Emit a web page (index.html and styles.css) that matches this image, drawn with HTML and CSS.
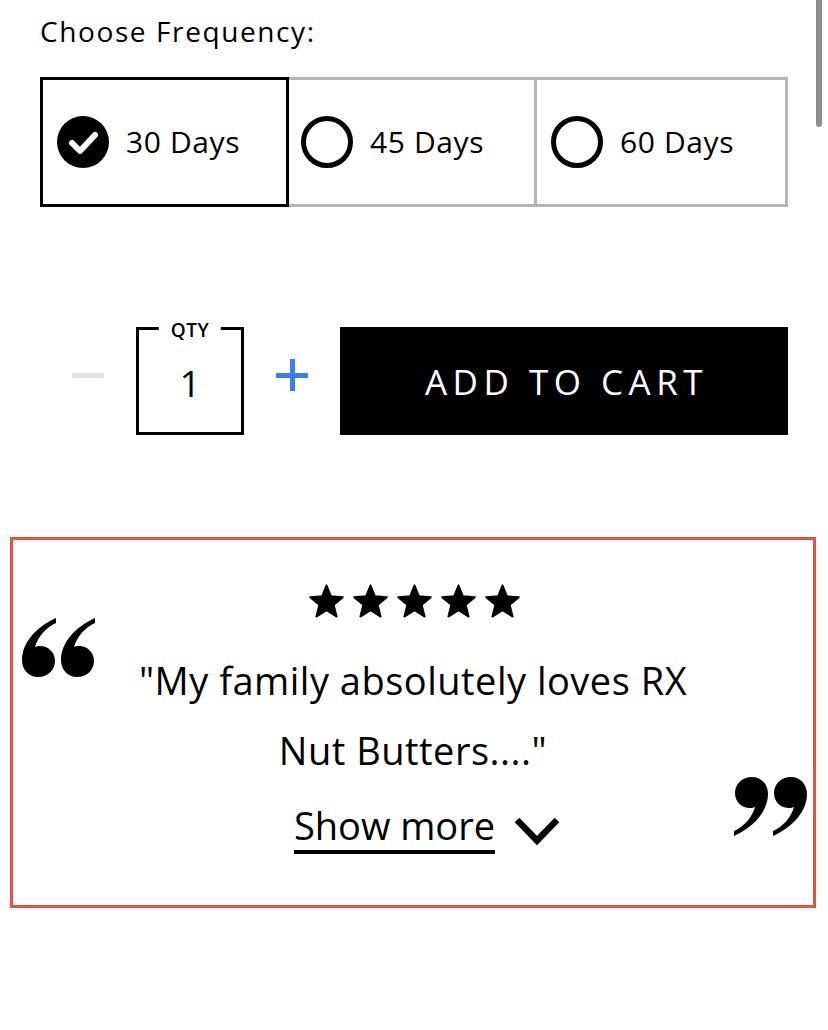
FILE: index.html
```html
<!DOCTYPE html>
<html>
<head>
<meta charset="utf-8">
<link rel="stylesheet" href="styles.css">
</head>
<body>
<div class="scrollbar"></div>
<main class="page">
  <section class="freq">
    <h2 class="freq-label">Choose Frequency:</h2>
    <div class="freq-options">
      <div class="option selected">
        <svg class="radio" viewBox="0 0 52 52"><circle cx="26" cy="26" r="26" fill="#000"/><path d="M15 27 L23 35 L38 19" fill="none" stroke="#fff" stroke-width="6" stroke-linecap="round" stroke-linejoin="round"/></svg>
        <span class="option-text">30 Days</span>
      </div>
      <div class="option">
        <svg class="radio" viewBox="0 0 52 52"><circle cx="26" cy="26" r="23.5" fill="none" stroke="#000" stroke-width="5"/></svg>
        <span class="option-text">45 Days</span>
      </div>
      <div class="option">
        <svg class="radio" viewBox="0 0 52 52"><circle cx="26" cy="26" r="23.5" fill="none" stroke="#000" stroke-width="5"/></svg>
        <span class="option-text">60 Days</span>
      </div>
    </div>
  </section>

  <section class="buy-row">
    <div class="qty-btn minus"><span class="bar-h grey"></span></div>
    <div class="qty-box">
      <span class="qty-label">QTY</span>
      <span class="qty-value">1</span>
    </div>
    <div class="qty-btn plus"><span class="bar-h blue"></span><span class="bar-v blue"></span></div>
    <button class="add-btn">ADD TO CART</button>
  </section>
</main>

<section class="review">
  <svg class="quote open" viewBox="0 0 76 61">
    <path d="M36 1 C16 10 2 26 2 43 C2 53 9 60 18 60 C28 60 35 53 35 44 C35 35 28 29 20 29 C18 29 16 29.5 15 30 C18 20 25 11 36 6 Z"/>
    <path d="M75 1 C55 10 41 26 41 43 C41 53 48 60 57 60 C67 60 74 53 74 44 C74 35 67 29 59 29 C57 29 55 29.5 54 30 C57 20 64 11 75 6 Z"/>
  </svg>
  <div class="stars">
    <svg class="star" viewBox="0 0 24 24"><path d="M12 1.5 L14.9 8.6 L22.6 9.2 L16.7 14.2 L18.6 21.8 L12 17.7 L5.4 21.8 L7.3 14.2 L1.4 9.2 L9.1 8.6 Z" stroke="#000" stroke-width="1.2" stroke-linejoin="round"/></svg>
    <svg class="star" viewBox="0 0 24 24"><path d="M12 1.5 L14.9 8.6 L22.6 9.2 L16.7 14.2 L18.6 21.8 L12 17.7 L5.4 21.8 L7.3 14.2 L1.4 9.2 L9.1 8.6 Z" stroke="#000" stroke-width="1.2" stroke-linejoin="round"/></svg>
    <svg class="star" viewBox="0 0 24 24"><path d="M12 1.5 L14.9 8.6 L22.6 9.2 L16.7 14.2 L18.6 21.8 L12 17.7 L5.4 21.8 L7.3 14.2 L1.4 9.2 L9.1 8.6 Z" stroke="#000" stroke-width="1.2" stroke-linejoin="round"/></svg>
    <svg class="star" viewBox="0 0 24 24"><path d="M12 1.5 L14.9 8.6 L22.6 9.2 L16.7 14.2 L18.6 21.8 L12 17.7 L5.4 21.8 L7.3 14.2 L1.4 9.2 L9.1 8.6 Z" stroke="#000" stroke-width="1.2" stroke-linejoin="round"/></svg>
    <svg class="star" viewBox="0 0 24 24"><path d="M12 1.5 L14.9 8.6 L22.6 9.2 L16.7 14.2 L18.6 21.8 L12 17.7 L5.4 21.8 L7.3 14.2 L1.4 9.2 L9.1 8.6 Z" stroke="#000" stroke-width="1.2" stroke-linejoin="round"/></svg>
  </div>
  <p class="review-text">"My family absolutely loves RX<br>Nut Butters...."</p>
  <div class="show-more">
    <span class="show-more-text">Show more</span>
    <svg class="chevron" viewBox="0 0 46 32"><path d="M3 5 L23 25.5 L43 5" fill="none" stroke="#000" stroke-width="6.5"/></svg>
  </div>
  <svg class="quote close" viewBox="0 0 76 61">
    <path d="M1 60 C21 51 35 35 35 18 C35 8 28 1 19 1 C9 1 2 8 2 17 C2 26 9 32 17 32 C19 32 21 31.5 22 31 C19 41 12 50 1 55 Z"/>
    <path d="M40 60 C60 51 74 35 74 18 C74 8 67 1 58 1 C48 1 41 8 41 17 C41 26 48 32 56 32 C58 32 60 31.5 61 31 C58 41 51 50 40 55 Z"/>
  </svg>
</section>
</body>
</html>
```

FILE: styles.css
```css
* { box-sizing: border-box; }
html, body { margin: 0; padding: 0; background: #fff; }
body {
  font-family: "Open Sans", "Noto Sans", sans-serif;
  color: #000;
  width: 828px;
  height: 1030px;
  overflow: hidden;
  position: relative;
}
.scrollbar {
  position: absolute;
  top: 0;
  left: 816px;
  width: 6px;
  height: 127px;
  background: #8e8e8e;
  border-radius: 0 0 3px 3px;
}
.page {
  padding: 0 40px;
  width: 828px;
}
.freq-label {
  margin: 0;
  padding-top: 13px;
  font-size: 28px;
  font-weight: 400;
  line-height: 36px;
  height: 77px;
  letter-spacing: 1.6px;
}
.freq-options {
  display: grid;
  grid-template-columns: 249px 248px 251px;
  width: 748px;
  height: 130px;
}
.option {
  display: flex;
  align-items: center;
  gap: 17px;
  border: 3px solid #b5b5b5;
  border-left: none;
  padding-left: 12px;
  height: 130px;
}
.option.selected {
  border: 3px solid #000;
  padding-left: 14px;
}
.option:nth-child(3) { padding-left: 14px; }
.radio { width: 52px; height: 52px; flex: none; }
.option-text { font-size: 30px; line-height: 1; letter-spacing: 0.6px; }

.buy-row {
  display: flex;
  align-items: center;
  gap: 32px;
  padding-left: 32px;
  margin-top: 120px;
  height: 108px;
}
.qty-btn {
  width: 32px;
  height: 32px;
  position: relative;
  margin-bottom: 12px;
  flex: none;
}
.bar-h, .bar-v { position: absolute; display: block; }
.bar-h { left: 0; top: 13.5px; width: 32px; height: 5px; }
.bar-v { left: 13.5px; top: 0; width: 5px; height: 32px; }
.grey { background: #e1e1e5; }
.blue { background: #3b7ded; }
.qty-box {
  position: relative;
  width: 108px;
  height: 108px;
  border: 3px solid #000;
  display: flex;
  align-items: center;
  justify-content: center;
  flex: none;
}
.qty-label {
  position: absolute;
  top: -10px;
  left: 50%;
  transform: translateX(-50%);
  background: #fff;
  padding: 0 12px;
  font-size: 19px;
  font-weight: 600;
  line-height: 20px;
  letter-spacing: 0.5px;
}
.qty-value { font-size: 37px; line-height: 1; padding-top: 2px; }
.add-btn {
  flex: 1;
  height: 108px;
  background: #000;
  color: #fff;
  border: none;
  font-family: "Open Sans", "Noto Sans", sans-serif;
  font-size: 35px;
  letter-spacing: 5.5px;
  font-weight: 400;
  padding: 0 0 0 5px;
}

.review {
  position: relative;
  margin-top: 102px;
  margin-left: 10px;
  width: 806px;
  height: 371px;
  border: 3px solid #e8503f;
  display: flex;
  flex-direction: column;
  align-items: center;
  padding-top: 43px;
}
.stars { display: flex; gap: 7px; padding-left: 2px; }
.star { width: 37px; height: 37px; }
.review-text {
  margin: 25px 0 0;
  font-size: 38px;
  line-height: 70px;
  text-align: center;
  letter-spacing: 0.5px;
}
.show-more {
  display: flex;
  align-items: center;
  gap: 19px;
  margin-top: 15px;
  padding-left: 28px;
}
.show-more-text {
  font-size: 38px;
  line-height: 50px;
  border-bottom: 4px solid #000;
}
.chevron { width: 46px; height: 32px; margin-top: 8px; }
.quote { position: absolute; width: 76px; height: 61px; fill: #000; }
.quote.open { left: 7px; top: 77px; }
.quote.close { left: 720px; top: 236px; }
```
